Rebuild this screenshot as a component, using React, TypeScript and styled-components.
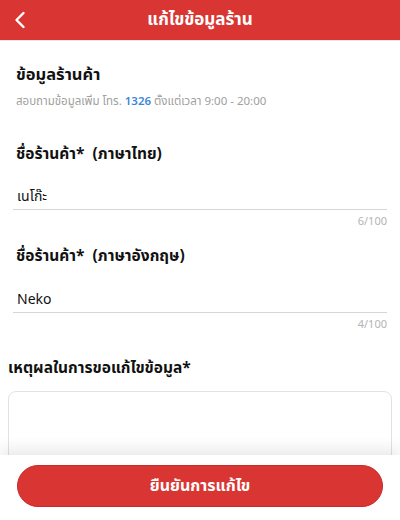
import React from "react";
import styled, { createGlobalStyle } from "styled-components";

const Global = createGlobalStyle`
  html, body { margin: 0; padding: 0; background: #ffffff; }
  body {
    font-family: "Noto Sans Thai", "Noto Sans", "DejaVu Sans", sans-serif;
    color: #111111;
    width: 400px;
    height: 520px;
    overflow: hidden;
  }
`;

const Page = styled.div`
  width: 400px;
  height: 520px;
  position: relative;
  overflow: hidden;
  background: #ffffff;
  display: flex;
  flex-direction: column;
`;

const Header = styled.header`
  height: 40px;
  flex: none;
  background: #d93633;
  display: flex;
  align-items: center;
  justify-content: center;
  position: relative;
  border-bottom: 1px solid #e6e6e6;
  box-sizing: content-box;
`;

const BackButton = styled.button`
  position: absolute;
  left: 8px;
  top: 8px;
  width: 24px;
  height: 24px;
  padding: 0;
  border: none;
  background: transparent;
  display: flex;
  align-items: center;
  justify-content: center;
`;

const Title = styled.h1`
  margin: 0;
  color: #ffffff;
  font-size: 17px;
  font-weight: 700;
  line-height: 24px;
`;

const Body = styled.main`
  display: flex;
  flex-direction: column;
  padding: 22px 0 0;
`;

const Section = styled.section<{ $inset: number }>`
  padding: 0 ${(p) => p.$inset}px;
  display: flex;
  flex-direction: column;
`;

const SectionTitle = styled.h2`
  margin: 0;
  font-size: 16.5px;
  font-weight: 700;
  line-height: 24px;
  color: #111;
`;

const Hint = styled.p`
  margin: 6px 0 0;
  font-size: 11.5px;
  line-height: 18px;
  color: #a0a0a0;
`;

const Phone = styled.span`
  color: #3a87d8;
  font-weight: 600;
`;

const Label = styled.div<{ $top: number }>`
  margin-top: ${(p) => p.$top}px;
  font-size: 15.5px;
  font-weight: 700;
  line-height: 24px;
  color: #111;
`;

const Field = styled.div<{ $top: number }>`
  margin: ${(p) => p.$top}px -3px 0;
  display: flex;
  flex-direction: column;
`;

const Value = styled.div`
  padding: 0 4px 2px;
  font-size: 14px;
  line-height: 20px;
  color: #111;
  border-bottom: 1.5px solid #d6d6d6;
`;

const Counter = styled.div`
  margin-top: 5px;
  text-align: right;
  font-size: 11px;
  line-height: 14px;
  color: #b3b3b3;
`;

const TextArea = styled.div`
  margin-top: 10px;
  height: 140px;
  border: 1px solid #e2e2e2;
  border-radius: 8px;
  background: #ffffff;
`;

const Footer = styled.footer`
  position: absolute;
  left: 0;
  right: 0;
  bottom: 0;
  height: 65px;
  background: #ffffff;
  box-shadow: 0 -6px 14px rgba(0, 0, 0, 0.09);
  display: flex;
  justify-content: center;
  padding-top: 10px;
  box-sizing: border-box;
`;

const ConfirmButton = styled.button`
  width: 366px;
  height: 42px;
  border: 1px solid #c92b28;
  border-radius: 21px;
  background: #d93633;
  color: #ffffff;
  font-family: inherit;
  font-size: 16px;
  font-weight: 700;
  line-height: 24px;
`;

export default function App() {
  return (
    <Page>
      <Global />
      <Header>
        <BackButton aria-label="back">
          <svg width="14" height="18" viewBox="0 0 14 18">
            <path d="M10.5 2 L3.5 9 L10.5 16" fill="none" stroke="#ffffff" strokeWidth="2.4" strokeLinecap="round" strokeLinejoin="round" />
          </svg>
        </BackButton>
        <Title>แก้ไขข้อมูลร้าน</Title>
      </Header>
      <Body>
        <Section $inset={16}>
          <SectionTitle>ข้อมูลร้านค้า</SectionTitle>
          <Hint>
            สอบถามข้อมูลเพิ่ม โทร. <Phone>1326</Phone> ตั้งแต่เวลา 9:00 - 20:00
          </Hint>
          <Label $top={32}>ชื่อร้านค้า*&nbsp; (ภาษาไทย)</Label>
          <Field $top={20}>
            <Value>เนโก๊ะ</Value>
            <Counter>6/100</Counter>
          </Field>
          <Label $top={16}>ชื่อร้านค้า*&nbsp; (ภาษาอังกฤษ)</Label>
          <Field $top={21}>
            <Value>Neko</Value>
            <Counter>4/100</Counter>
          </Field>
        </Section>
        <Section $inset={8}>
          <Label $top={25}>เหตุผลในการขอแก้ไขข้อมูล*</Label>
          <TextArea />
        </Section>
      </Body>
      <Footer>
        <ConfirmButton>ยืนยันการแก้ไข</ConfirmButton>
      </Footer>
    </Page>
  );
}
